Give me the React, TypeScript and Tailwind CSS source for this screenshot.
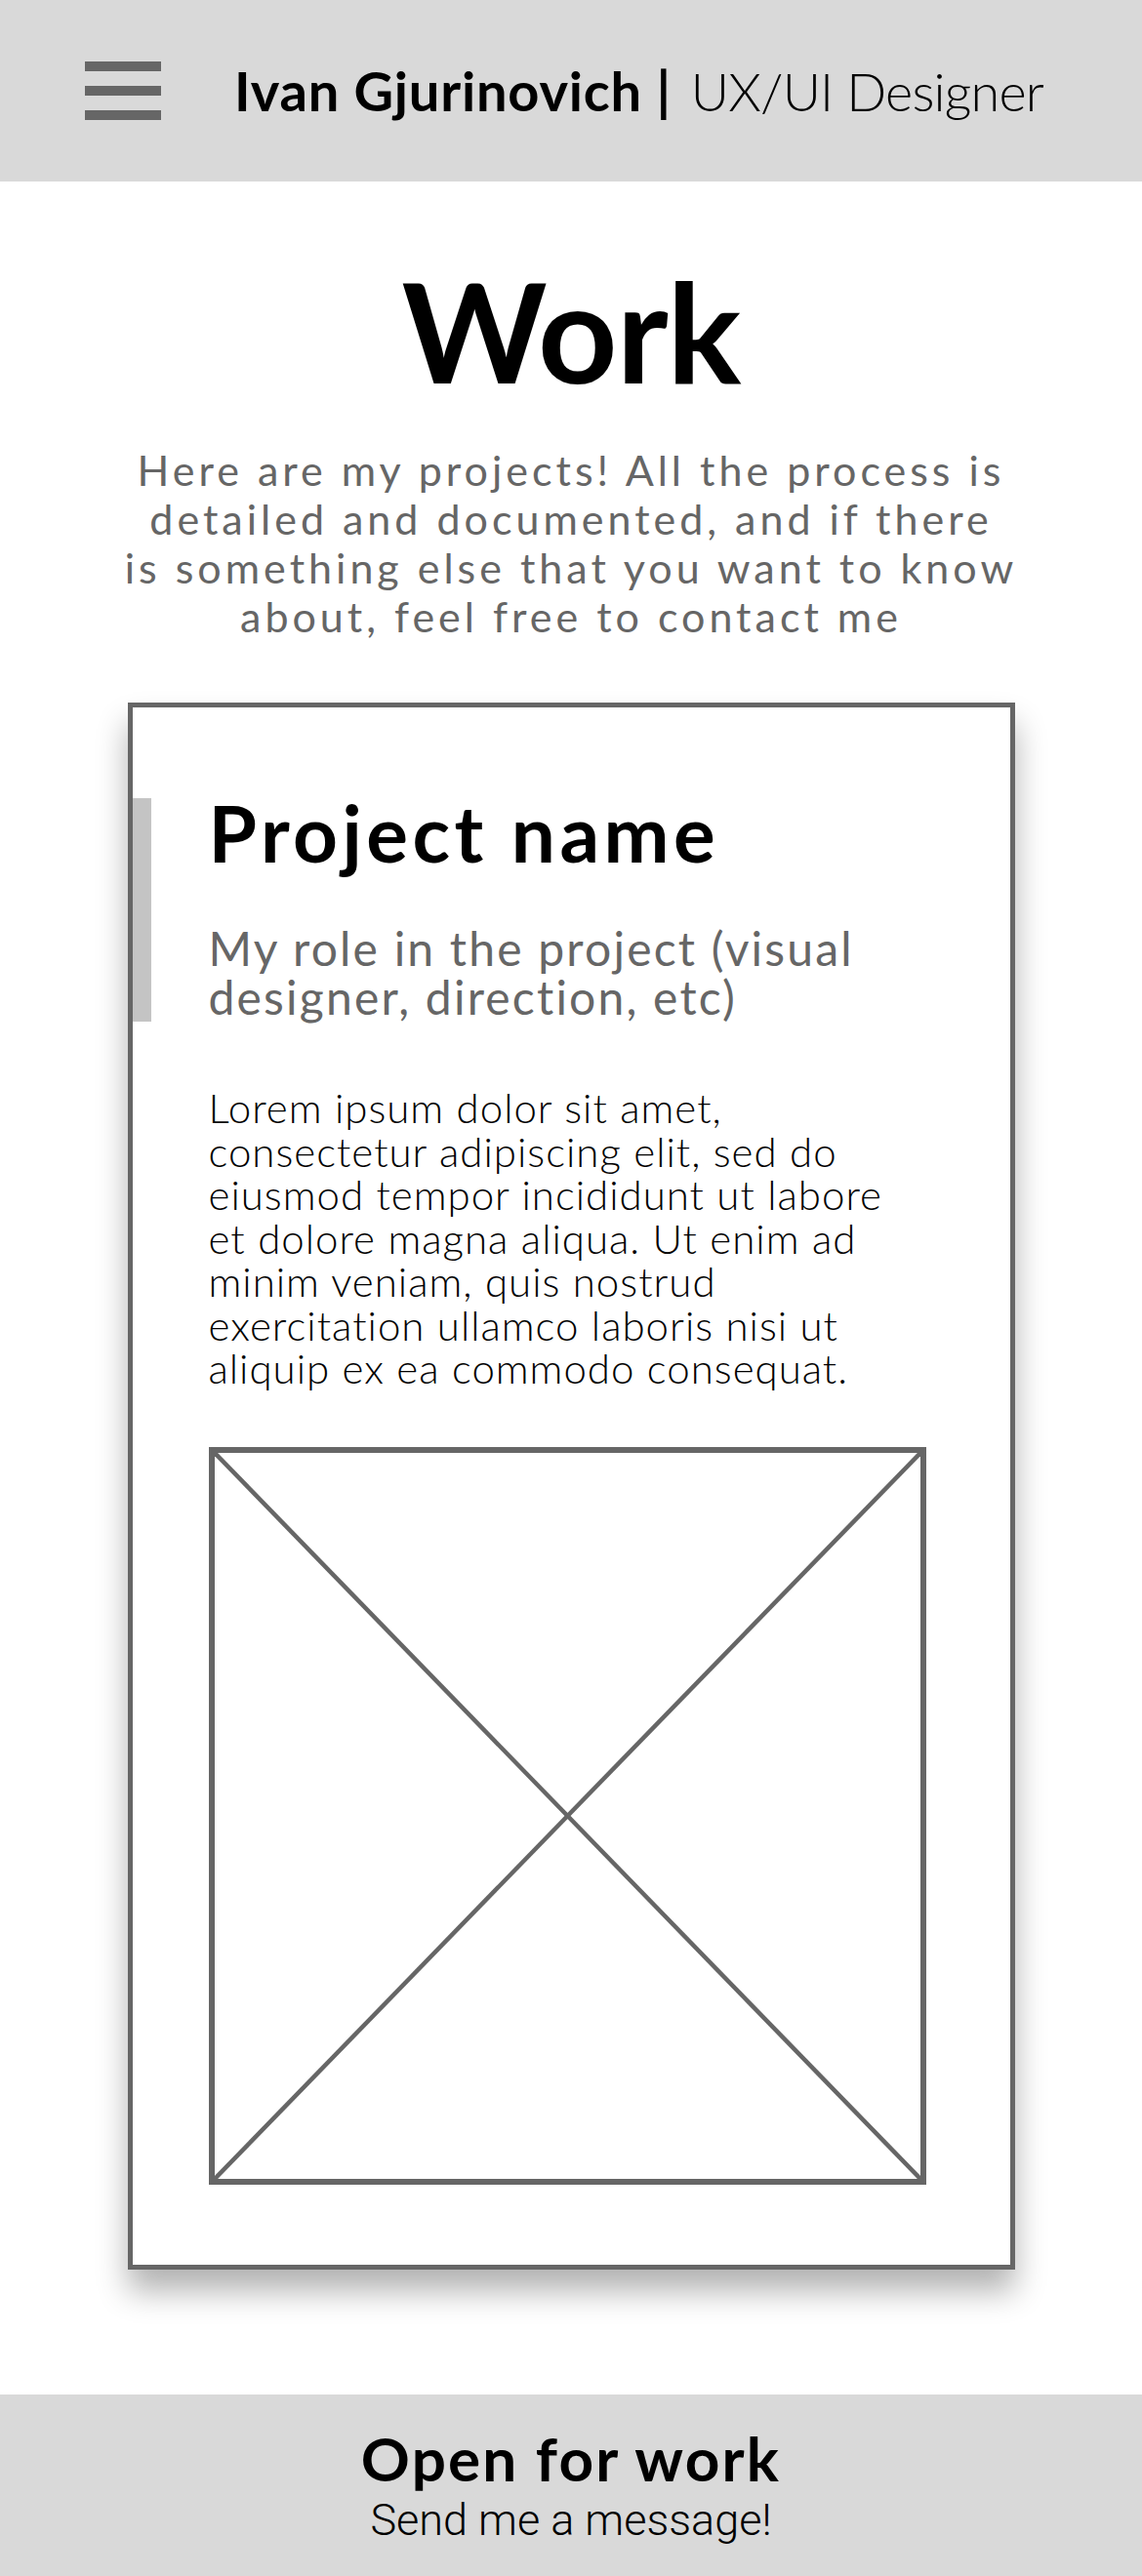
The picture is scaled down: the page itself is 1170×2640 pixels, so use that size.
export default function App() {
  const lorem = [
    'Lorem ipsum dolor sit amet,',
    'consectetur adipiscing elit, sed do',
    'eiusmod tempor incididunt ut labore',
    'et dolore magna aliqua. Ut enim ad',
    'minim veniam, quis nostrud',
    'exercitation ullamco laboris nisi ut',
    'aliquip ex ea commodo consequat.',
  ]

  return (
    <div className="w-[1170px] min-h-[2640px] bg-white flex flex-col font-['Lato',sans-serif]">
      {/* Header */}
      <header className="h-[186px] bg-[#d9d9d9] flex items-center pl-[87px]">
        <div className="flex flex-col gap-[15px]">
          <span className="block w-[78px] h-[10px] bg-[#666666]" />
          <span className="block w-[78px] h-[10px] bg-[#666666]" />
          <span className="block w-[78px] h-[10px] bg-[#666666]" />
        </div>
        <p className="ml-[75px] text-[56px] leading-none text-black whitespace-nowrap">
          <span className="font-bold tracking-[0.8px]">Ivan Gjurinovich |</span>
          <span className="pl-[6px] font-light text-[54px] tracking-[-0.8px]"> UX/UI Designer</span>
        </p>
      </header>

      {/* Intro */}
      <h1 className="mt-[81px] text-center text-[142px] leading-none font-bold tracking-[-1px] text-black">Work</h1>
      <p className="mt-[48px] text-center text-[43px] leading-[50px] tracking-[4px] text-[#666666]">
        Here are my projects! All the process is
        <br />
        detailed and documented, and if there
        <br />
        is something else that you want to know
        <br />
        about, feel free to contact me
      </p>

      {/* Project card */}
      <section className="mt-[63px] mx-auto w-[909px] border-[5px] border-[#666666] bg-white shadow-[0_22px_30px_rgba(0,0,0,0.3)] pt-[93px] pb-[82px]">
        <div className="flex">
          <div className="w-[19px] bg-[#c4c4c4]" />
          <div className="ml-[59px]">
            <h2 className="text-[80px] leading-[70px] font-bold tracking-[4.5px] text-black">Project name</h2>
            <p className="mt-[59px] text-[48px] leading-[50px] tracking-[2.2px] text-[#666666]">
              My role in the project (visual
              <br />
              designer, direction, etc)
            </p>
          </div>
        </div>

        <div className="pl-[78px]">
          <p className="mt-[66px] text-[42px] leading-[44.5px] font-light tracking-[1px] text-black">
            {lorem.map((line) => (
              <span key={line} className="block">
                {line}
              </span>
            ))}
          </p>

          <div className="mt-[58px] w-[735px] h-[756px] border-[6px] border-[#666666]">
            <svg className="block w-full h-full" viewBox="0 0 723 744" preserveAspectRatio="none">
              <line x1="0" y1="0" x2="723" y2="744" stroke="#666666" strokeWidth="4.5" />
              <line x1="723" y1="0" x2="0" y2="744" stroke="#666666" strokeWidth="4.5" />
            </svg>
          </div>
        </div>
      </section>

      {/* Footer */}
      <footer className="mt-[128px] h-[186px] bg-[#d9d9d9] flex flex-col items-center pt-[34px]">
        <p className="text-[62px] leading-none font-bold tracking-[2.2px] text-black">Open for work</p>
        <p className="mt-[10px] text-[45px] leading-[45px] font-light text-black font-['Roboto',sans-serif]">
          Send me a message!
        </p>
      </footer>
    </div>
  )
}
